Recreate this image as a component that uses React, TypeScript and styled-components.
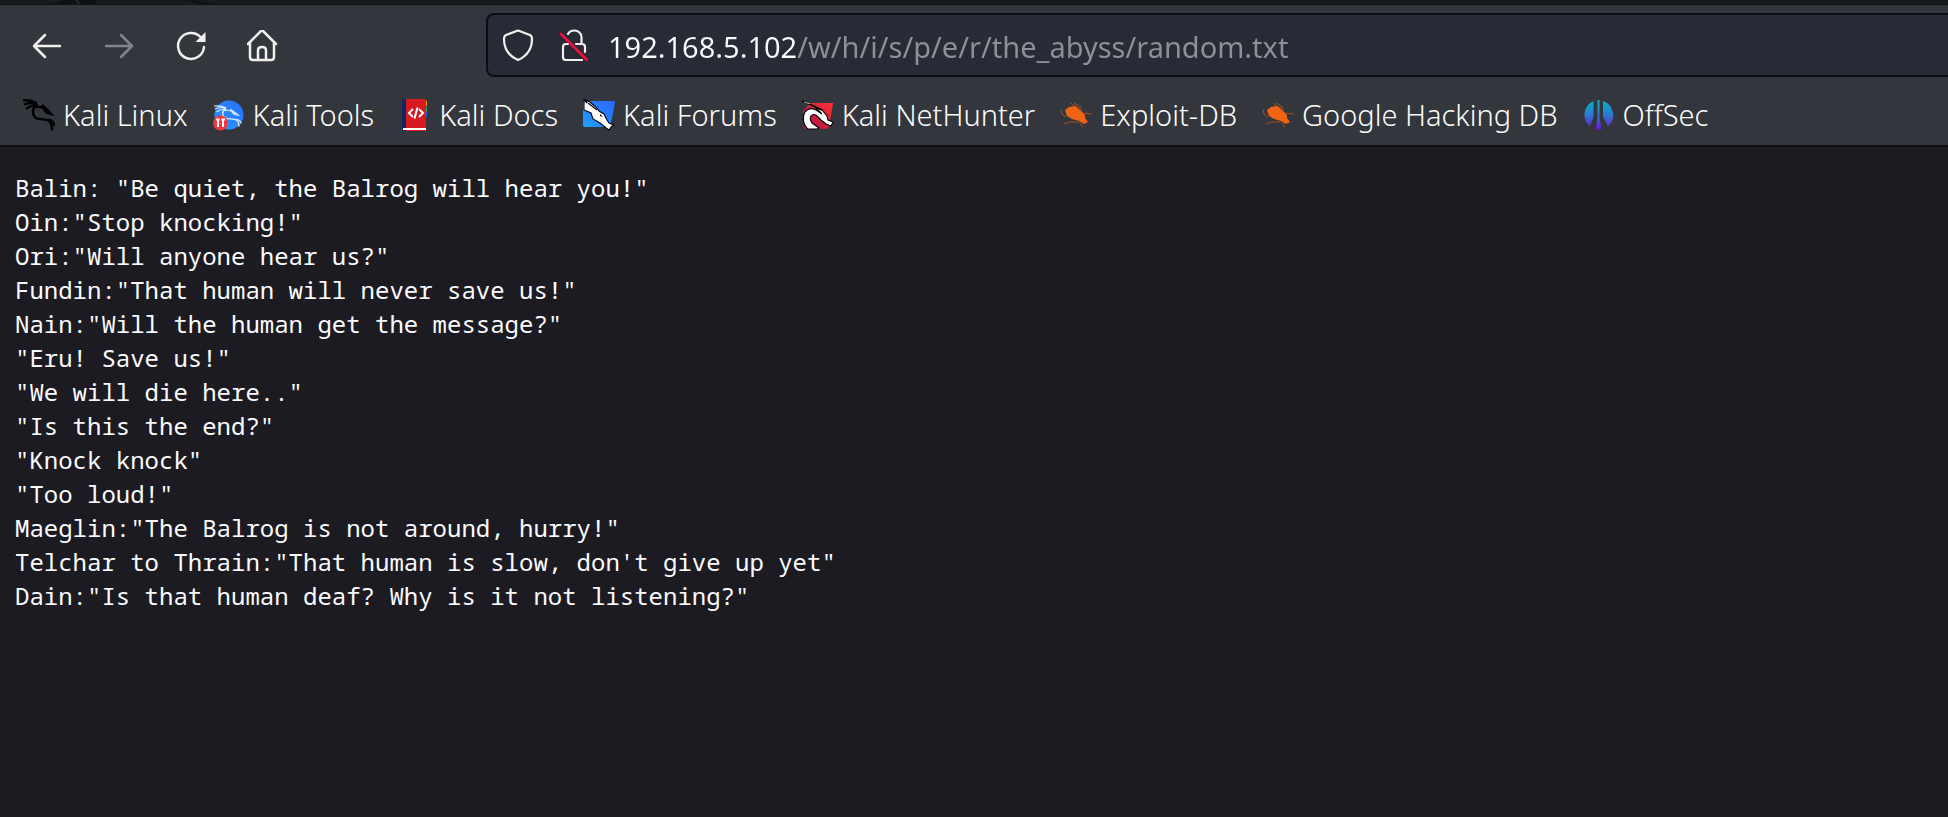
import React from "react";
import styled, { createGlobalStyle } from "styled-components";

const GlobalStyle = createGlobalStyle`
  * { box-sizing: border-box; }
  html, body { margin: 0; min-height: 100%; background: #1c1b22; }
`;

const ui = `"Noto Sans", "Open Sans", sans-serif`;
const mono = `"Noto Sans Mono", "DejaVu Sans Mono", monospace`;

const Window = styled.div`
  display: flex;
  flex-direction: column;
  min-height: 100vh;
  background: #1c1b22;
  overflow-x: hidden;
`;

const TabEdge = styled.svg`
  display: block;
  flex: none;
  width: 100%;
  height: 5px;
  background: #191a1e;
  border-bottom: 1px solid #0f1014;
`;

const Toolbars = styled.header`
  background: #33363d;
  border-bottom: 2px solid #0c0d12;
`;

const NavBar = styled.div`
  display: flex;
  align-items: center;
  padding: 8px 0 0 11px;
`;

const NavButtons = styled.nav`
  display: flex;
  flex: none;
  width: 475px;
`;

const NavButton = styled.button`
  display: grid;
  place-items: center;
  width: 72px;
  height: 64px;
  padding: 2px 0 0;
  border: 0;
  background: none;
  color: #f0f0ec;

  &:disabled { color: #83858a; }
`;

const Glyph = styled.svg`
  width: 32px;
  height: 32px;
  fill: none;
  stroke: currentColor;
  stroke-width: 2.5;
  stroke-linecap: round;
  stroke-linejoin: round;
`;

const AddressBar = styled.label`
  display: flex;
  flex: 1;
  align-items: center;
  gap: 20px;
  height: 64px;
  padding-left: 14px;
  border: 2px solid #0c0d12;
  border-right: 0;
  border-radius: 8px 0 0 8px;
  background: #282a36;
`;

const AddressIcon = styled.svg`
  flex: none;
  height: 32px;
`;

const AddressInput = styled.input`
  flex: 1;
  min-width: 0;
  height: 48px;
  margin-right: 16px;
  padding: 2px 0 0;
  border: 0;
  outline: 0;
  font: 400 29px/46px ${ui};
  color: #fbfbfe;
  background: linear-gradient(90deg, #fbfbfe 188px, #8f9097 188px);
  background-clip: text;
  -webkit-background-clip: text;
  -webkit-text-fill-color: transparent;
`;

const BookmarkBar = styled.nav`
  display: flex;
  align-items: center;
  gap: 25px;
  height: 68px;
  padding: 8px 23px 0;
`;

const Bookmark = styled.a`
  display: flex;
  flex: none;
  align-items: center;
  gap: 8px;
  font: 300 29px/40px ${ui};
  color: #fbfbf8;
  text-decoration: none;
  white-space: nowrap;
`;

const Favicon = styled.svg`
  flex: none;
  width: 32px;
  height: 32px;
`;

const Document = styled.main`
  flex: 1;
  padding: 24px 15px;
`;

const PlainText = styled.pre`
  margin: 0;
  font: 400 24px/34px ${mono};
  color: #fbfbfe;
`;

const dragon = (
  <>
    <path d="M0 1.500C5 .8 9 1.500 14 4M1 5.500C6 3.500 10 3.500 14 5M3 10C7 7 10 6 14 6.500" />
    <path d="M12 3.500L13.500 6.500C9 9 9 16 13 19C17 21.500 23 19 26.500 22.500C29 25 29 28 29 31.500" />
    <path d="M13 8C18 7 22 9 28 15L24 14L21 11M19 6L27 13.500M25.500 20.500C29 21.500 31 24 31.500 27" />
  </>
);

const BackIcon = () => (
  <Glyph viewBox="0 0 32 32">
    <path d="M29 16H3M14 5L3 16L14 27" />
  </Glyph>
);
const ForwardIcon = () => (
  <Glyph viewBox="0 0 32 32">
    <path d="M3 16H29M18 5L29 16L18 27" />
  </Glyph>
);
const ReloadIcon = () => (
  <Glyph viewBox="0 0 32 32">
    <path d="M29 17A13 13 0 1 1 25.500 7" />
    <path d="M30.500 2V12H20.500Z" fill="currentColor" stroke="none" />
  </Glyph>
);
const HomeIcon = () => (
  <Glyph viewBox="0 0 32 32">
    <path d="M1 14L14 1Q15 0 16 1L29 14M3 13V27Q3 30 6 30H24Q27 30 27 27V13" />
    <path d="M11 30V20Q11 17 15 17Q19 17 19 20V30" />
  </Glyph>
);

const favicons = {
  kali: (
    <Favicon viewBox="0 0 32 32" fill="none" stroke="#000" strokeWidth="2.400">{dragon}</Favicon>
  ),
  tools: (
    <Favicon viewBox="0 0 32 32">
      <defs>
        <linearGradient id="tools" x1="0" y1="1" x2="1" y2="0">
          <stop offset="0" stopColor="#269cff" /><stop offset="1" stopColor="#2a6cff" />
        </linearGradient>
      </defs>
      <circle cx="16" cy="16" r="14.500" fill="url(#tools)" />
      <g fill="none" stroke="#dceaff" strokeWidth="1.600" transform="translate(1 6) scale(.86 .68)">{dragon}</g>
      <circle cx="7.500" cy="24" r="7.500" fill="#f8343c" />
      <path d="M3 20.500H6.500M8.500 20.500H12M5 20.500V28M10 20.500V28" stroke="#fff" strokeWidth="2" />
    </Favicon>
  ),
  docs: (
    <Favicon viewBox="0 0 32 32">
      <path d="M27 2h1v5h-1z" fill="#f79a1c" />
      <path d="M27 8h1v5h-1z" fill="#2aa86a" />
      <path d="M27 13h1v5h-1z" fill="#2668d8" />
      <path d="M3 0h24v32H3z" fill="#d71920" />
      <path d="M3 0h4v32H3z" fill="#10265c" />
      <path d="M4 29h23v2H4z" fill="#fff" />
      <path d="M14 10L10 14L14 18M20 10L24 14L20 18M18.500 8.500L15.500 19.500" fill="none" stroke="#fff" strokeWidth="2" />
    </Favicon>
  ),
  forums: (
    <Favicon viewBox="0 0 32 32">
      <defs>
        <linearGradient id="forums" x1="0" y1="1" x2="1" y2="0">
          <stop offset="0" stopColor="#21a0ff" /><stop offset="1" stopColor="#2b64ff" />
        </linearGradient>
      </defs>
      <path d="M1 2H31Q32 2 32 4L27 28H2Q0 28 0 26V2Z" fill="url(#forums)" />
      <path d="M1 1L4 4L3 1L7 3L14 9L16 12L21 15L24 21L26 24L31 26L29 27L26 31L23 29L17 24L10 20L8 14L1 11Z" fill="#fff" stroke="#000" strokeWidth="1.100" />
      <path d="M5 4L14 11" fill="none" stroke="#000" strokeWidth="1.200" />
      <path d="M17 15L20 18L17 17Z" fill="#000" />
    </Favicon>
  ),
  nethunter: (
    <Favicon viewBox="0 0 32 32">
      <defs>
        <linearGradient id="hunter" x1="0" y1="1" x2="1" y2="0">
          <stop offset="0" stopColor="#a51048" /><stop offset="1" stopColor="#ff3232" />
        </linearGradient>
      </defs>
      <path d="M8 4H31L27 28Q26 30 24 30H3Q1 30 1 27V12Z" fill="url(#hunter)" />
      <path d="M6 30C1 26 0 18 3 13C6 9 10 9 14 11L20 15L13 8L20 11L25 17L26 21L31 23L29 27L24 25L19 21L14 16C8 14 7 20 10 24L17 29L15 30Z" fill="#fff" stroke="#000" strokeWidth="1.100" />
      <path d="M0 2L7 5L20 11" fill="none" stroke="#000" strokeWidth="1.800" />
      <path d="M2 3L8 5" stroke="#ddd" strokeWidth=".8" />
    </Favicon>
  ),
  exploit: (
    <Favicon viewBox="0 0 32 32">
      <path d="M11 4L14 7L19 9L22 12M1 10L2 15L6 18M4 25L9 23L18 23M22 14L32 15M19 23L23 28M14 4L22 9" fill="none" stroke="#a8501f" strokeWidth="1" />
      <path d="M5 11L9 8L15 7L20 11L25 16L25 19L28 23L24 25L19 22L12 20L7 17Z" fill="#ef6412" />
    </Favicon>
  ),
  offsec: (
    <Favicon viewBox="0 0 32 32">
      <defs>
        <linearGradient id="offsec" gradientUnits="userSpaceOnUse" x1="0" y1="1" x2="0" y2="31">
          <stop offset="0" stopColor="#06b8c6" /><stop offset=".5" stopColor="#2d78cf" /><stop offset="1" stopColor="#6a16cc" />
        </linearGradient>
      </defs>
      <path d="M10.500 2V18L7 27.500A15 15 0 0 1 10.500 2ZM20 2V18L25 27.500A15 15 0 0 0 20 2ZM14.500 1H16.500V18L18.500 30.500H12.500L14.500 18Z" fill="url(#offsec)" />
    </Favicon>
  ),
};

const bookmarks: { label: string; icon: keyof typeof favicons }[] = [
  { label: "Kali Linux", icon: "kali" },
  { label: "Kali Tools", icon: "tools" },
  { label: "Kali Docs", icon: "docs" },
  { label: "Kali Forums", icon: "forums" },
  { label: "Kali NetHunter", icon: "nethunter" },
  { label: "Exploit-DB", icon: "exploit" },
  { label: "Google Hacking DB", icon: "exploit" },
  { label: "OffSec", icon: "offsec" },
];

const lines = [
  'Balin: "Be quiet, the Balrog will hear you!"',
  'Oin:"Stop knocking!"',
  'Ori:"Will anyone hear us?"',
  'Fundin:"That human will never save us!"',
  'Nain:"Will the human get the message?"',
  '"Eru! Save us!"',
  '"We will die here.."',
  '"Is this the end?"',
  '"Knock knock"',
  '"Too loud!"',
  'Maeglin:"The Balrog is not around, hurry!"',
  'Telchar to Thrain:"That human is slow, don\'t give up yet"',
  'Dain:"Is that human deaf? Why is it not listening?"',
];

export default function App() {
  return (
    <Window>
      <GlobalStyle />
      <TabEdge aria-hidden="true">
        <path d="M50 4L64 0H96V4ZM180 0H192L212 4H204Z" fill="#0f1013" />
        <path d="M76 0L80 4" stroke="#24262b" strokeWidth="2" />
      </TabEdge>
      <Toolbars>
        <NavBar>
          <NavButtons aria-label="Navigation">
            <NavButton aria-label="Back"><BackIcon /></NavButton>
            <NavButton aria-label="Forward" disabled><ForwardIcon /></NavButton>
            <NavButton aria-label="Reload"><ReloadIcon /></NavButton>
            <NavButton aria-label="Home"><HomeIcon /></NavButton>
          </NavButtons>
          <AddressBar>
            <AddressIcon width="32" viewBox="0 0 32 32" fill="none" stroke="#f0f0ec" strokeWidth="2.200" strokeLinejoin="round">
              <path d="M16 1.500L28 6Q30 7 30 10C30 20 25 27 16 31C7 27 2 20 2 10Q2 7 4 6Z" />
            </AddressIcon>
            <AddressIcon width="34" viewBox="0 0 34 32" fill="none" stroke="#f0f0ec" strokeWidth="2.200" strokeLinecap="round">
              <path d="M14 5C15 3 17.500 1.500 20.500 1.500C24.500 1.500 27.500 4.500 27.500 8V15H28Q31 15 31 18V23M14 15H12Q9 15 9 18V28Q9 31 12 31H28M22 15H27" />
              <path d="M7 5L33 31" stroke="#f01040" strokeWidth="2.600" />
            </AddressIcon>
            <AddressInput aria-label="Address" defaultValue="192.168.5.102/w/h/i/s/p/e/r/the_abyss/random.txt" spellCheck={false} />
          </AddressBar>
        </NavBar>
        <BookmarkBar aria-label="Bookmarks">
          {bookmarks.map((b) => (
            <Bookmark key={b.label} href="#">
              {favicons[b.icon]}
              {b.label}
            </Bookmark>
          ))}
        </BookmarkBar>
      </Toolbars>
      <Document>
        <PlainText>{lines.join("\n")}</PlainText>
      </Document>
    </Window>
  );
}
